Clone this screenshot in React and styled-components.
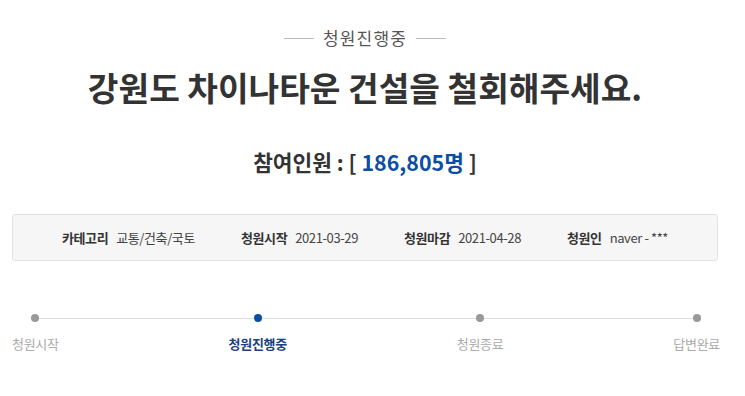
import styled, { createGlobalStyle } from "styled-components";

const GlobalStyle = createGlobalStyle`
  html, body {
    margin: 0;
    padding: 0;
    background: #fff;
    font-family: "Noto Sans CJK KR", "Noto Sans", sans-serif;
  }
`;

const Page = styled.div`
  width: 745px;
  height: 396px;
  overflow: hidden;
  padding: 0 27px 0 12px;
  box-sizing: border-box;
`;

const Status = styled.div`
  display: flex;
  align-items: center;
  justify-content: center;
  gap: 9px;
  padding-top: 26px;
  font-size: 17px;
  line-height: 24px;
  letter-spacing: 1.2px;
  color: #555;

  &::before,
  &::after {
    content: "";
    width: 30px;
    height: 1px;
    background: #bbb;
  }
`;

const Title = styled.h1`
  margin: 15px 0 0;
  text-align: center;
  font-size: 33.3px;
  line-height: 44px;
  font-weight: 700;
  color: #333;
`;

const Count = styled.p`
  margin: 38px 0 0;
  text-align: center;
  font-size: 21.4px;
  line-height: 30px;
  font-weight: 700;
  color: #333;
`;

const Num = styled.span`
  color: #0b4ea2;
`;

const InfoBox = styled.ul`
  list-style: none;
  margin: 37px 0 0;
  width: 706px;
  height: 47px;
  box-sizing: border-box;
  padding: 0;
  display: flex;
  align-items: center;
  justify-content: center;
  gap: 46px;
  background: #f6f6f6;
  border: 1px solid #e2e2e2;
  border-radius: 3px;
`;

const InfoItem = styled.li`
  font-size: 13px;
  color: #444;
  letter-spacing: -0.4px;
  white-space: nowrap;
`;

const Label = styled.strong`
  font-weight: 700;
  color: #333;
  margin-right: 8px;
`;

const Steps = styled.ol`
  list-style: none;
  margin: 53px 0 0;
  padding: 0;
  width: 708px;
  display: flex;
  justify-content: space-between;
  position: relative;

  &::before {
    content: "";
    position: absolute;
    left: 23px;
    right: 24px;
    top: 4px;
    height: 1px;
    background: #ddd;
  }
`;

const Step = styled.li`
  position: relative;
  display: flex;
  flex-direction: column;
  align-items: center;
  gap: 12px;
  font-size: 13px;
  line-height: 20px;
  color: ${(p) => (p.$active ? "#1d3f7e" : "#aaa")};
  font-weight: ${(p) => (p.$active ? 700 : 400)};
  letter-spacing: -0.3px;
`;

const Dot = styled.span`
  width: 8px;
  height: 8px;
  border-radius: 50%;
  background: ${(p) => (p.$active ? "#0b4ea2" : "#999")};
`;

const steps = [
  { name: "청원시작" },
  { name: "청원진행중", active: true },
  { name: "청원종료" },
  { name: "답변완료" },
];

export default function App() {
  return (
    <>
      <GlobalStyle />
      <Page>
        <Status>청원진행중</Status>
        <Title>강원도 차이나타운 건설을 철회해주세요.</Title>
        <Count>
          참여인원 : [ <Num>186,805명</Num> ]
        </Count>
        <InfoBox>
          <InfoItem>
            <Label>카테고리</Label>교통/건축/국토
          </InfoItem>
          <InfoItem>
            <Label>청원시작</Label>2021-03-29
          </InfoItem>
          <InfoItem>
            <Label>청원마감</Label>2021-04-28
          </InfoItem>
          <InfoItem>
            <Label>청원인</Label>naver - ***
          </InfoItem>
        </InfoBox>
        <Steps>
          {steps.map((s) => (
            <Step key={s.name} $active={s.active}>
              <Dot $active={s.active} />
              {s.name}
            </Step>
          ))}
        </Steps>
      </Page>
    </>
  );
}
